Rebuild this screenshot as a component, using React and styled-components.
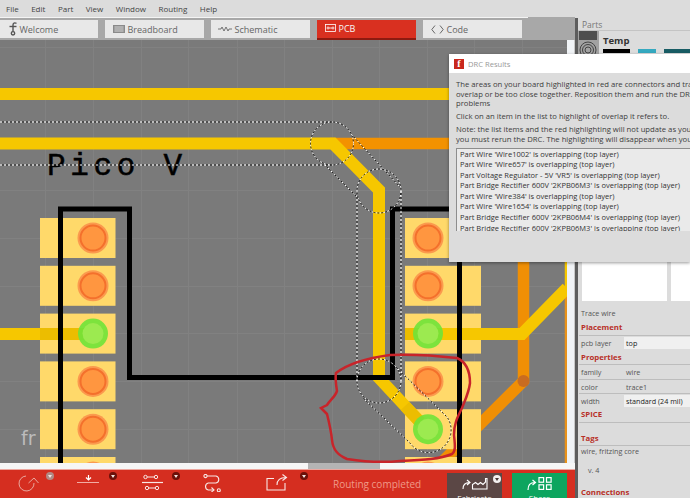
import React from "react";
import styled, { createGlobalStyle } from "styled-components";

const GlobalStyle = createGlobalStyle`
  html, body {
    margin: 0;
    padding: 0;
    background: #dcdcdc;
  }
  body {
    font-family: "Open Sans", "Noto Sans", sans-serif;
  }
`;

const Screen = styled.div`
  position: relative;
  width: 690px;
  height: 498px;
  overflow: hidden;
  display: flex;
  flex-direction: column;
  background: #dcdcdc;
`;

const MenuBar = styled.div`
  height: 17px;
  flex: none;
  display: flex;
  align-items: center;
  gap: 12.5px;
  padding-left: 6px;
  font-size: 8px;
  color: #444;
`;

const Body = styled.div`
  flex: 1;
  min-height: 0;
  display: flex;
`;

const Workspace = styled.div`
  width: 575px;
  flex: none;
  display: flex;
  flex-direction: column;
`;

const TabBar = styled.div`
  height: 23px;
  flex: none;
  display: flex;
  gap: 7px;
  align-items: flex-start;
  padding-top: 3px;
  box-sizing: border-box;
  background: linear-gradient(#f4f4f4, #f4f4f4) no-repeat 0 0 / 528px 1px, #a8a8a8;
`;

const Tab = styled.div`
  width: 99px;
  height: ${(p) => (p.$active ? 20 : 18)}px;
  display: flex;
  align-items: center;
  gap: 2.5px;
  padding-left: ${(p) => p.$pad}px;
  padding-bottom: ${(p) => (p.$active ? 2 : 0)}px;
  box-sizing: border-box;
  font-size: 9px;
  color: ${(p) => (p.$active ? "#f6f6f6" : "#666")};
  background: ${(p) => (p.$active ? "#d93020" : "#e8e8e8")};
  border-bottom: ${(p) => (p.$active ? "2px solid #8e1a10" : "none")};
  &:first-child {
    margin-left: -1px;
  }
`;

const CanvasRow = styled.div`
  flex: 1;
  min-height: 0;
  display: flex;
`;

const Board = styled.svg`
  display: block;
  flex: none;
`;

const VScroll = styled.div`
  width: 8px;
  flex: none;
  background: #f0f3f6;
  border-right: 1px solid #c8c8c8;
  box-sizing: border-box;
`;

const HScroll = styled.div`
  height: 7px;
  flex: none;
  padding-left: 308px;
  background: #f6f6f6;
  box-sizing: border-box;
  border-bottom: 1px solid #eda79f;
`;

const ScrollThumb = styled.div`
  width: 72px;
  height: 6px;
  background: #b4b4b4;
`;

const Toolbar = styled.div`
  height: 28px;
  flex: none;
  display: flex;
  align-items: flex-end;
  background: #d52e20;
  padding-left: 18px;
  box-sizing: border-box;
`;

const Tool = styled.div`
  position: relative;
  width: ${(p) => p.$w}px;
  height: 28px;
  flex: none;
  display: flex;
  flex-direction: column;
  padding-top: 4px;
  box-sizing: border-box;
  overflow: hidden;
`;

const ToolIcon = styled.div`
  height: 18px;
  flex: none;
  display: flex;
`;

const ToolLabel = styled.span`
  margin-top: 4px;
  font-size: 8px;
  line-height: 10px;
  white-space: nowrap;
  color: #f5dcd8;
`;

const Caret = styled.span`
  position: absolute;
  top: ${(p) => p.$y || 2}px;
  left: ${(p) => p.$x}px;
  width: 8px;
  height: 8px;
  border-radius: 50%;
  background: ${(p) => p.$bg || "#6c1009"};
  &::after {
    content: "";
    position: absolute;
    left: 2px;
    top: 3px;
    border-left: 2px solid transparent;
    border-right: 2px solid transparent;
    border-top: 3px solid ${(p) => p.$fg || "#f0e4e2"};
  }
`;

const Status = styled.div`
  width: 114px;
  height: 28px;
  flex: none;
  padding-top: 8px;
  box-sizing: border-box;
  font-size: 10px;
  line-height: 13px;
  color: #f09a88;
  white-space: nowrap;
`;

const ActionButton = styled.div`
  position: relative;
  width: 55px;
  height: 25px;
  flex: none;
  margin-left: ${(p) => p.$ml || 0}px;
  padding-top: ${(p) => p.$pt}px;
  box-sizing: border-box;
  display: flex;
  flex-direction: column;
  align-items: center;
  overflow: hidden;
  background: ${(p) => p.$bg};
  color: #fff;
  svg {
    flex: none;
  }
`;

const ActionLabel = styled.span`
  flex: none;
  margin-top: 3px;
  font-size: 8px;
  line-height: 10px;
  white-space: nowrap;
`;

const Panel = styled.div`
  width: 115px;
  flex: none;
  display: flex;
  flex-direction: column;
  background: #dcdcdc;
  border-left: 3px solid #5d5d5d;
  box-sizing: border-box;
  margin-top: 1px;
  overflow: hidden;
  font-size: 7.2px;
  color: #555;
`;

const PanelTitle = styled.div`
  height: 12px;
  flex: none;
  padding-left: 4px;
  font-size: 8.5px;
  line-height: 13px;
  color: #777;
  border-bottom: 1px solid #c4c4c4;
`;

const BinHead = styled.div`
  display: flex;
  height: 23px;
  flex: none;
`;

const BinIcons = styled.div`
  width: 21px;
  flex: none;
  padding-left: 1px;
  box-sizing: border-box;
  background: #a2a2a2;
  display: flex;
  flex-direction: column;
`;

const BinContent = styled.div`
  flex: 1;
  display: flex;
  flex-direction: column;
  padding: 3px 0 0 4px;
`;

const BinName = styled.div`
  height: 15px;
  flex: none;
  font-size: 9.5px;
  font-weight: 700;
  line-height: 13px;
  color: #333;
`;

const PartThumbs = styled.div`
  display: flex;
  gap: 8px;
  height: 4px;
`;

const PartThumb = styled.div`
  width: ${(p) => p.$w}px;
  flex: none;
  background: ${(p) => p.$c};
`;

const BinGrid = styled.div`
  height: 247px;
  flex: none;
  display: flex;
  gap: 4px;
  padding-left: 4px;
`;

const BinTile = styled.div`
  width: 85px;
  flex: none;
  background: #fff;
`;

const Inspector = styled.div`
  display: flex;
  flex-direction: column;
  padding-left: 1px;
`;

const SectionTitle = styled.div`
  height: ${(p) => p.$h}px;
  flex: none;
  box-sizing: border-box;
  margin-top: ${(p) => p.$mt || 0}px;
  padding: ${(p) => p.$pt || 0}px 0 0 2px;
  font-size: 7.8px;
  font-weight: 700;
  line-height: 15px;
  color: #b83028;
  border-bottom: ${(p) => (p.$open ? "none" : "1px solid #bdbdbd")};
`;

const PropRow = styled.div`
  display: flex;
  align-items: center;
  height: ${(p) => p.$h}px;
  flex: none;
  box-sizing: border-box;
  border-bottom: ${(p) => (p.$plain ? "none" : "1px solid #bdbdbd")};
`;

const PropKey = styled.span`
  width: 45px;
  padding-left: 2px;
  box-sizing: border-box;
  flex: none;
`;

const PropValue = styled.span`
  flex: 1;
  padding-left: 2px;
  line-height: 12px;
  color: ${(p) => (p.$field ? "#222" : "#555")};
  background: ${(p) => (p.$field ? "#f0f0f0" : "transparent")};
  white-space: nowrap;
`;

const PlainText = styled.div`
  padding-left: ${(p) => p.$pl || 2}px;
  margin-top: ${(p) => p.$mt || 0}px;
  height: ${(p) => p.$h || 11}px;
  line-height: ${(p) => p.$h || 11}px;
  flex: none;
  white-space: nowrap;
`;

const Dialog = styled.div`
  position: absolute;
  left: 449px;
  top: 54px;
  width: 241px;
  height: 208px;
  background: #dcdcdc;
  box-shadow: 0 1px 3px rgba(0, 0, 0, 0.4);
`;

const DialogTitle = styled.div`
  height: 19px;
  display: flex;
  align-items: center;
  gap: 4px;
  padding-left: 5px;
  background: #fff;
  font-size: 7.6px;
  color: #999;
`;

const AppMark = styled.span`
  width: 10px;
  height: 10px;
  display: flex;
  align-items: center;
  justify-content: center;
  background: #c9281c;
  color: #fff;
  font-family: "Liberation Serif", serif;
  font-size: 10px;
  font-weight: 700;
`;

const DialogBody = styled.div`
  padding: 7.3px 0 0 7px;
  font-size: 7.7px;
  line-height: 9.4px;
  color: #3c3c3c;
  white-space: nowrap;
`;

const Para = styled.p`
  margin: 0 0 3.6px;
`;

const IssueList = styled.div`
  height: 83px;
  margin-top: 1.2px;
  padding-left: 3px;
  overflow: hidden;
  background: #eaeaea;
  border: 1px solid #8d8d8d;
  border-right: none;
  border-bottom: none;
  box-sizing: border-box;
`;

const Issue = styled.div`
  height: 10.6px;
  line-height: 10.6px;
  font-size: 7.5px;
  color: #333;
`;

const Squiggle = styled.svg`
  position: absolute;
  left: 310px;
  top: 345px;
  pointer-events: none;
`;

const issues = [
  "Part Wire 'Wire1002' is overlapping (top layer)",
  "Part Wire 'Wire657' is overlapping (top layer)",
  "Part Voltage Regulator - 5V 'VR5' is overlapping (top layer)",
  "Part Bridge Rectifier  600V '2KPB06M3' is overlapping (top layer)",
  "Part Wire 'Wire384' is overlapping (top layer)",
  "Part Wire 'Wire1654' is overlapping (top layer)",
  "Part Bridge Rectifier  600V '2KPB06M4' is overlapping (top layer)",
  "Part Bridge Rectifier  600V '2KPB06M3' is overlapping (top layer)",
];

const gridX = [45, 93, 141, 188, 237, 284, 332, 379, 427, 474, 522];
const gridY = [7, 55, 103, 150, 198, 246, 293, 341, 389];
const rows = [0, 1, 2, 3, 4, 5].map((i) => 178 + i * 47.8);

const Via = ({ cx, cy, on }) =>
  on ? (
    <g>
      <circle cx={cx} cy={cy} r={15} fill="#6fe338" opacity={0.9} />
      <circle cx={cx} cy={cy} r={10.5} fill="#9cea50" />
    </g>
  ) : (
    <g>
      <circle cx={cx} cy={cy} r={15.5} fill="#fb9a4e" />
      <circle cx={cx} cy={cy} r={12.5} fill="#ff9640" stroke="#f4702c" strokeWidth={2} />
    </g>
  );

const outline = (
  <>
    <path d="M0 82H332" />
    <path d="M0 125H332" />
    <circle cx={332} cy={103.5} r={21.5} />
    <path d="M352 95L400 147" />
    <path d="M325 125L358 158" />
    <circle cx={379} cy={151} r={22} />
    <path d="M357 151V341" />
    <path d="M401 151V341" />
    <circle cx={379} cy={341} r={22} />
    <path d="M395 326L447 377A22 22 0 0 1 410 403L363 358" />
  </>
);

const PcbBoard = () => (
  <Board width={567} height={423} viewBox="0 0 567 423">
    <rect width={567} height={423} fill="#7a7a7a" />
    {gridX.map((x) => (
      <line key={x} x1={x + 0.5} x2={x + 0.5} y1={0} y2={423} stroke="#818181" />
    ))}
    {gridY.map((y) => (
      <line key={y} x1={0} x2={567} y1={y + 0.5} y2={y + 0.5} stroke="#818181" />
    ))}

    {/* bottom copper, under the pads */}
    <path d="M330 103.5H460" stroke="#f39200" strokeWidth={11.5} fill="none" />
    <path d="M523.5 150V341L440 424" stroke="#f08f04" strokeWidth={11.5} fill="none" />
    <circle cx={523.5} cy={341} r={6} fill="#c96c20" />
    <path d="M566 248V423" stroke="#e8921a" strokeWidth={2.5} fill="none" />

    {rows.map((y) => (
      <rect key={y} x={40} y={y} width={75.5} height={40} fill="#ffd96a" />
    ))}
    {rows.map((y) => (
      <rect key={y} x={405} y={y} width={76} height={40} fill="#ffd96a" />
    ))}

    {/* top copper */}
    <path d="M0 54H460" stroke="#f6c700" strokeWidth={12} fill="none" />
    <path
      d="M0 103.5H333L379 150V338L420 382"
      stroke="#f6c700"
      strokeWidth={12}
      fill="none"
    />
    <path d="M0 294H86" stroke="#f6c700" strokeWidth={12} fill="none" />
    <path d="M428 294H522L567 248" stroke="#f6c700" strokeWidth={12} fill="none" />
    <path d="M566 220V250" stroke="#f6c700" strokeWidth={2.5} fill="none" />
    <path d="M40 294H86M405 294H428M405 366L420 382" stroke="#ecbd00" strokeWidth={12} fill="none" />

    {rows.map((y, i) => (
      <Via key={y} cx={93} cy={y + 20} on={i === 2} />
    ))}
    {rows.map((y, i) => (
      <Via key={y} cx={428} cy={y + 20} on={i === 2 || i === 4} />
    ))}

    {/* silkscreen */}
    <path d="M60.5 423V169H129.5V337.5H392.5V169H459.5V423" stroke="#000" strokeWidth={5} fill="none" />
    <text
      x={47}
      y={135}
      fontFamily="'Liberation Mono', monospace"
      fontSize={31}
      fill="#000"
      stroke="#000"
      strokeWidth={0.5}
      textLength={135}
    >
      Pico V
    </text>
    <text
      x={21}
      y={405}
      fontFamily="'DejaVu Sans', sans-serif"
      fontSize={19}
      fill="#bcbcbc"
    >
      fr
    </text>

    {/* overlap outlines */}
    <g fill="none" stroke="#fff" strokeWidth={1} strokeDasharray="2 2">
      {outline}
    </g>
    <g fill="none" stroke="#222" strokeWidth={1} strokeDasharray="2 2" strokeDashoffset={2}>
      {outline}
    </g>
  </Board>
);

const ChipIcon = () => (
  <svg width="18" height="9" viewBox="0 0 18 9">
    <rect width="18" height="9" fill="#4e4e4e" />
  </svg>
);

const RingIcon = () => (
  <svg width="18" height="14" viewBox="0 0 18 14" fill="none" stroke="#444" strokeWidth="1">
    <circle cx="9" cy="10" r="8" />
    <circle cx="9" cy="10" r="5.5" />
    <circle cx="9" cy="10" r="3" />
  </svg>
);

const RotateIcon = () => (
  <svg width="21" height="18" viewBox="0 0 21 18" fill="none" stroke="#e9a89e" strokeWidth="1">
    <path d="M16 9A7.5 7.5 0 1 1 8 2" />
    <path d="M10.5 9L16 4L20.5 9" />
  </svg>
);

const FlipIcon = () => (
  <svg width="23" height="18" viewBox="0 0 23 18" fill="none">
    <path d="M0 8.5H22" stroke="#f2aca4" strokeWidth="1" />
    <path d="M11.5 1V5.5M9 3.5L11.5 6L14 3.5" stroke="#fff" strokeWidth="1.2" />
  </svg>
);

const AlignIcon = () => (
  <svg width="24" height="18" viewBox="0 0 24 18" fill="none" stroke="#f8e8e6">
    <path d="M2 8.5H23" strokeWidth="1.2" />
    <circle cx="5.5" cy="3" r="1.7" />
    <circle cx="16" cy="3" r="1.7" />
    <path d="M7.2 3H14.3" />
    <circle cx="7" cy="14" r="1.7" />
    <circle cx="17" cy="14" r="1.7" />
    <path d="M8.7 14H15.3" />
  </svg>
);

const RouteIcon = () => (
  <svg width="19" height="18" viewBox="0 0 19 18" fill="none" stroke="#f8e8e6" strokeWidth="1.1">
    <circle cx="2.5" cy="2" r="1.6" />
    <path d="M4.1 2H13A3.6 3.6 0 0 1 13 9H5.3A3.6 3.6 0 0 0 5.3 16H11" />
    <path d="M8.5 13.5L11 16L8.5 18" />
    <circle cx="15.8" cy="16.3" r="1.5" />
  </svg>
);

const ExportIcon = () => (
  <svg width="22" height="18" viewBox="0 0 22 18" fill="none" stroke="#f8e8e6" strokeWidth="1.1">
    <path d="M8 4.5H1V16H19V9" />
    <path d="M11 11C11 6 14 3.5 20 3.5M16.5 0.5L20.5 3.5L16.5 6.5" />
  </svg>
);

const FabIcon = () => (
  <svg width="26" height="12" viewBox="0 0 26 12" fill="none" stroke="#fff" strokeWidth="1.1">
    <path d="M1 11C1 7 3 4.5 7.5 4.5M5 2L8 4.5L5 7" />
    <path d="M10.5 11V6.5L13.5 4.5L16 6.5L18.5 4.5L21 6.5L23.5 4V0.5H25V11Z" />
  </svg>
);

const ShareIcon = () => (
  <svg width="25" height="13" viewBox="0 0 25 13" fill="none" stroke="#fff" strokeWidth="1.2">
    <path d="M1 13C1 8 3 5.5 8 5.5M5.5 3L8.5 5.5L5.5 8" />
    <rect x="12" y="0.6" width="4.6" height="4.6" />
    <rect x="19.5" y="0.6" width="4.6" height="4.6" />
    <rect x="12" y="7.8" width="4.6" height="4.6" />
    <rect x="19.5" y="7.8" width="4.6" height="4.6" />
  </svg>
);

const LogoF = () => (
  <svg width="8" height="14" viewBox="0 0 8 14" fill="none" stroke="#555" strokeWidth="1.4">
    <path d="M7.5 1.3C5.5 .3 4 1 4 3V9.5" />
    <path d="M.5 4.5H7.5" />
    <circle cx="4" cy="11.3" r="1.7" />
  </svg>
);

const BreadboardIcon = () => (
  <svg width="12" height="8" viewBox="0 0 12 8">
    <rect width="12" height="8" fill="#8a8a8a" />
    <path d="M1 2H11M1 4H11M1 6H11M3 1V7M5 1V7M7 1V7M9 1V7" stroke="#d6d6d6" strokeWidth=".6" />
  </svg>
);

const SchematicIcon = () => (
  <svg width="14" height="6" viewBox="0 0 14 6" fill="none" stroke="#666" strokeWidth=".9">
    <path d="M0 3H3L4 1L6 5L8 1L10 5L11 3H14" />
  </svg>
);

const PcbIcon = () => (
  <svg width="11" height="8" viewBox="0 0 11 8" fill="none" stroke="#fff" strokeWidth=".8">
    <rect x=".5" y=".5" width="10" height="7" />
    <circle cx="3" cy="4" r="1" />
    <circle cx="8" cy="4" r="1" />
    <path d="M4 4H7" />
  </svg>
);

const CodeIcon = () => (
  <svg width="13" height="9" viewBox="0 0 13 9" fill="none" stroke="#666" strokeWidth="1">
    <path d="M4 .5L.8 4.5L4 8.5M9 .5L12.2 4.5L9 8.5" />
  </svg>
);

export default function App() {
  return (
    <Screen>
      <GlobalStyle />
      <MenuBar>
        <span>File</span>
        <span>Edit</span>
        <span>Part</span>
        <span>View</span>
        <span>Window</span>
        <span>Routing</span>
        <span>Help</span>
      </MenuBar>
      <Body>
        <Workspace>
          <TabBar>
            <Tab $pad={10}>
              <LogoF />
              Welcome
            </Tab>
            <Tab $pad={8}>
              <BreadboardIcon />
              Breadboard
            </Tab>
            <Tab $pad={7}>
              <SchematicIcon />
              Schematic
            </Tab>
            <Tab $active $pad={8}>
              <PcbIcon />
              PCB
            </Tab>
            <Tab $pad={8}>
              <CodeIcon />
              Code
            </Tab>
          </TabBar>
          <CanvasRow>
            <PcbBoard />
            <VScroll />
          </CanvasRow>
          <HScroll>
            <ScrollThumb />
          </HScroll>
          <Toolbar>
            <Tool $w={59}>
              <ToolIcon>
                <RotateIcon />
              </ToolIcon>
              <ToolLabel>Rotate</ToolLabel>
              <Caret $x={28} $bg="#b08a85" />
            </Tool>
            <Tool $w={63}>
              <ToolIcon>
                <FlipIcon />
              </ToolIcon>
              <ToolLabel>Flip Vertical</ToolLabel>
              <Caret $x={32} />
            </Tool>
            <Tool $w={63}>
              <ToolIcon>
                <AlignIcon />
              </ToolIcon>
              <ToolLabel>Swap</ToolLabel>
              <Caret $x={32} />
            </Tool>
            <Tool $w={63}>
              <ToolIcon>
                <RouteIcon />
              </ToolIcon>
              <ToolLabel>Autoroute</ToolLabel>
            </Tool>
            <Tool $w={67}>
              <ToolIcon>
                <ExportIcon />
              </ToolIcon>
              <ToolLabel>Export for PCB</ToolLabel>
              <Caret $x={34} />
            </Tool>
            <Status>Routing completed</Status>
            <ActionButton $pt={5} $bg="#5b4745">
              <FabIcon />
              <ActionLabel>Fabricate</ActionLabel>
              <Caret $x={46} $y={0} $bg="#f4f0ef" $fg="#4a3836" />
            </ActionButton>
            <ActionButton $ml={10} $pt={4} $bg="#0da55f">
              <ShareIcon />
              <ActionLabel>Share</ActionLabel>
            </ActionButton>
          </Toolbar>
        </Workspace>
        <Panel>
          <PanelTitle>Parts</PanelTitle>
          <BinHead>
            <BinIcons>
              <ChipIcon />
              <RingIcon />
            </BinIcons>
            <BinContent>
              <BinName>Temp</BinName>
              <PartThumbs>
                <PartThumb $w={27} $c="#000" />
                <PartThumb $w={18} $c="#35a9c0" />
                <PartThumb $w={26} $c="#185c64" />
              </PartThumbs>
            </BinContent>
          </BinHead>
          <BinGrid>
            <BinTile />
            <BinTile />
          </BinGrid>
          <Inspector>
            <PlainText $mt={6} $h={13}>
              Trace wire
            </PlainText>
            <SectionTitle $h={16}>Placement</SectionTitle>
            <PropRow $h={14} $plain>
              <PropKey>pcb layer</PropKey>
              <PropValue $field>top</PropValue>
            </PropRow>
            <SectionTitle $h={15}>Properties</SectionTitle>
            <PropRow $h={15}>
              <PropKey>family</PropKey>
              <PropValue>wire</PropValue>
            </PropRow>
            <PropRow $h={14}>
              <PropKey>color</PropKey>
              <PropValue>trace1</PropValue>
            </PropRow>
            <PropRow $h={13} $plain>
              <PropKey>width</PropKey>
              <PropValue $field>standard (24 mil)</PropValue>
            </PropRow>
            <SectionTitle $h={16}>SPICE</SectionTitle>
            <SectionTitle $h={23} $pt={8}>
              Tags
            </SectionTitle>
            <PlainText>wire, fritzing core</PlainText>
            <PlainText $pl={9} $mt={8}>
              v. 4
            </PlainText>
            <SectionTitle $h={13} $mt={9} $open>
              Connections
            </SectionTitle>
          </Inspector>
        </Panel>
      </Body>
      <Dialog>
        <DialogTitle>
          <AppMark>f</AppMark>
          DRC Results
        </DialogTitle>
        <DialogBody>
          <Para>
            The areas on your board highlighted in red are connectors and traces which may
            <br />
            overlap or be too close together. Reposition them and run the DRC again to find more
            <br />
            problems
          </Para>
          <Para>Click on an item in the list to highlight of overlap it refers to.</Para>
          <Para>
            Note: the list items and the red highlighting will not update as you make changes,
            <br />
            you must rerun the DRC. The highlighting will disappear when you close this dialog.
          </Para>
          <IssueList>
            {issues.map((issue) => (
              <Issue key={issue}>{issue}</Issue>
            ))}
          </IssueList>
        </DialogBody>
      </Dialog>
      <Squiggle width={170} height={125} viewBox="310 345 170 125" fill="none">
        <path
          d="M336 373C345 366 360 359 390 355C410 354 440 356 457 358C466 362 470 372 470 383C469 392 466 398 462 408C457 418 454 424 454 435C455 445 456 451 452 454C440 459 425 460 400 461C380 463 360 461 347 459C338 455 333 450 332 440C331 430 329 422 327 414L321 408L327 405C330 400 335 397 337 391C336 385 335 378 336 373Z"
          stroke="#c8242a"
          strokeWidth="2.5"
        />
      </Squiggle>
    </Screen>
  );
}
